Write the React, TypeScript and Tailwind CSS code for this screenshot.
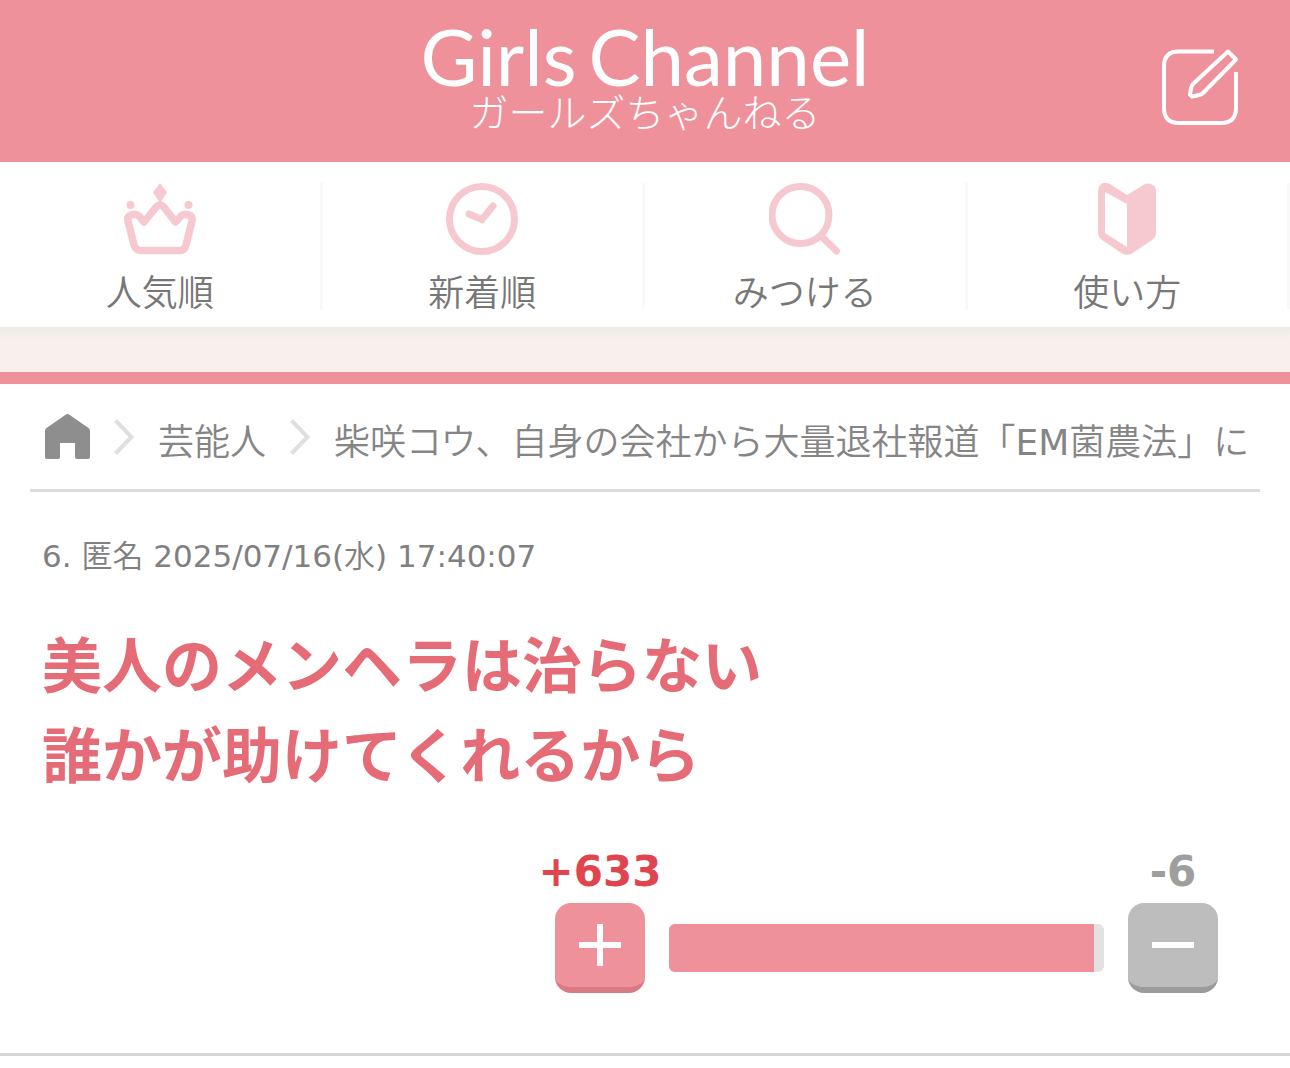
import React, { useState } from 'react'

type NavItem = {
  label: string;
  href: string;
  icon: React.ReactNode;
};

interface VoteProps {
  plus: number;
  minus: number;
}

const CrownIcon = () => (
  <svg className="h-[72px] w-[72px] shrink-0" viewBox="0 0 72 72" fill="none">
    <path d="M36 0 43 9.500 36 20 29 9.500Z" fill="#f6c9d1" />
    <circle cx="6.500" cy="22" r="4" fill="#f6c9d1" />
    <circle cx="64.500" cy="22" r="4" fill="#f6c9d1" />
    <path
      d="M10 62 4 38Q3 33.500 7 32Q12 30 15 33L20 39 31 25.500Q36 18.500 41 25.500L51.500 39 57 33Q60 30 65 32Q69 33.500 68 38L62 62Q60.500 67.500 56 67.500H16.500Q12 67.500 10 62Z"
      stroke="#f6c9d1"
      strokeWidth="7.500"
      strokeLinejoin="round"
    />
  </svg>
)

const ClockIcon = () => (
  <svg className="h-[72px] w-[72px] shrink-0" viewBox="0 0 72 72" fill="none" stroke="#f6c9d1" strokeWidth="7">
    <circle cx="36" cy="36" r="32.500" />
    <path d="M23 31 36 36.500 47 23" strokeLinecap="round" />
  </svg>
)

const SearchIcon = () => (
  <svg className="h-[72px] w-[72px] shrink-0" viewBox="0 0 72 72" fill="none" stroke="#f6c9d1" strokeWidth="7">
    <circle cx="31.500" cy="32" r="28.500" />
    <path d="M53 54 67.500 68" strokeLinecap="round" />
  </svg>
)

const GuideIcon = () => (
  <svg className="h-[72px] w-[72px] shrink-0" viewBox="0 0 72 72">
    <path
      fillRule="evenodd"
      fill="#f6c9d1"
      d="M36 12 54 1Q60-1 64 4Q65 6 65 8V50Q65 54 61 57L41 70.500Q36 73 31 70.500L11 57Q7 54 7 50V8Q7 2 12 0Q15-1 19 1ZM14 9V50L36 64V21Z"
    />
  </svg>
)

const ChevronIcon = () => (
  <svg className="h-9 w-5 shrink-0" viewBox="0 0 20 36" fill="none">
    <path d="M1.500 1.500 17.500 18 1.500 34.500" stroke="#dfdfdf" strokeWidth="4" />
  </svg>
)

const navItems: NavItem[] = [
  { label: '人気順', href: '#popular', icon: <CrownIcon /> },
  { label: '新着順', href: '#new', icon: <ClockIcon /> },
  { label: 'みつける', href: '#search', icon: <SearchIcon /> },
  { label: '使い方', href: '#guide', icon: <GuideIcon /> },
]

function Header() {
  return (
    <header className="grid h-[162px] grid-cols-[1fr_auto_1fr] items-start bg-[#ef919b] text-white">
      <a
        href="#top"
        className="col-start-2 flex flex-col items-center pt-[18px] whitespace-nowrap">
        <span className="flex gap-3 font-['Lato',sans-serif] text-[78px] leading-[76px] font-normal">
          <span>Girls</span>
          <span>Channel</span>
        </span>
        <span className="text-[39px] leading-10 font-light">ガールズちゃんねる</span>
      </a>
      <button
        type="button"
        aria-label="トピックを投稿"
        className="mt-12 mr-[51px] justify-self-end">
        <svg className="h-[78px] w-[78px]" viewBox="0 0 78 78" fill="none" stroke="#fff" strokeWidth="4">
          <path d="M53 3.500H18Q3 3.500 3 18V60Q3 75 18 75H60Q75 75 75 60V24" />
          <path d="M67 3.500 75 11.500 42 45Q40 47 31 48.500L29 46.500Q30 38 32 36Z" strokeLinejoin="round" />
        </svg>
      </button>
    </header>
  )
}

function Breadcrumbs() {
  return (
    <nav
      aria-label="パンくず"
      className="mx-[30px] flex h-[108px] items-center gap-6 border-b-[3px] border-[#dcdcdc] pl-[15px] text-4xl font-[350] whitespace-nowrap text-[#858585]">
      <a href="#home" aria-label="ホーム" className="shrink-0">
        <svg className="h-[45px] w-[45px]" viewBox="0 0 45 45">
          <path
            d="M21 .6Q22.500-.4 24 .6L43.500 14Q45 15 45 17V43Q45 45 43 45H32Q30 45 30 43V29H15V43Q15 45 13 45H2Q0 45 0 43V17Q0 15 1.500 14Z"
            fill="#8e8e8e"
          />
        </svg>
      </a>
      <ChevronIcon />
      <a href="#entertainer" className="shrink-0 pt-3">芸能人</a>
      <ChevronIcon />
      <a href="#topic" className="min-w-0 overflow-hidden pt-3">
        柴咲コウ、自身の会社から大量退社報道「<span className="font-normal">EM</span>菌農法」に
      </a>
    </nav>
  )
}

function Vote({ plus, minus }: VoteProps) {
  const [votes, setVotes] = useState({ plus, minus })
  const ratio = (votes.plus / (votes.plus + votes.minus)) * 100
  // keep the minus side visible even when it is tiny
  const width = Math.min(ratio, 97.7)

  return (
    <div className="ml-auto flex w-[663px] max-w-full items-end gap-6">
      <div className="flex w-[90px] flex-col items-center">
        <span className="text-[42px] leading-[63px] font-bold text-[#e0454d]">
          +{votes.plus}
        </span>
        <button
          type="button"
          aria-label="プラス"
          onClick={() => setVotes({ ...votes, plus: votes.plus + 1 })}
          className="flex h-[90px] w-[90px] justify-center rounded-2xl border-b-6 border-[#d87a84] bg-[#ef919b] pt-[21px]">
          <svg className="h-[42px] w-[42px]" viewBox="0 0 42 42" stroke="#fff" strokeWidth="6">
            <path d="M0 21H42M21 0V42" />
          </svg>
        </button>
      </div>
      <div className="mb-[21px] h-12 flex-1 overflow-hidden rounded-md bg-[#e2e2e2]">
        <div className="h-full bg-[#ef919b]" style={{ width: `${width}%` }} />
      </div>
      <div className="flex w-[90px] flex-col items-center">
        <span className="text-[42px] leading-[63px] font-bold text-[#9e9e9e]">
          -{votes.minus}
        </span>
        <button
          type="button"
          aria-label="マイナス"
          onClick={() => setVotes({ ...votes, minus: votes.minus + 1 })}
          className="flex h-[90px] w-[90px] justify-center rounded-2xl border-b-6 border-[#9b9b9b] bg-[#bdbdbd] pt-[21px]">
          <svg className="h-[42px] w-[42px]" viewBox="0 0 42 42" stroke="#fff" strokeWidth="6">
            <path d="M0 21H42" />
          </svg>
        </button>
      </div>
    </div>
  )
}

export default function App() {
  return (
    <div className="min-h-screen bg-white font-['DejaVu_Sans','Noto_Sans_CJK_JP',sans-serif]" lang="ja">
      <Header />
      <nav className="grid h-[165px] grid-cols-4 pt-[21px] pb-[18px]">
        {navItems.map((item) => (
          <a
            key={item.label}
            href={item.href}
            className="flex h-[126px] flex-col items-center gap-5 border-r-3 border-[#f9f9f9] text-4xl leading-[38px] font-[350] text-[#777]">
            {item.icon}
            <span>{item.label}</span>
          </a>
        ))}
      </nav>
      <div className="h-[57px] border-b-12 border-[#ef919b] bg-linear-to-b from-[#ecebe6] to-[#f9efed] to-25%" />

      <main>
        <Breadcrumbs />
        <article className="border-b-3 border-[#d6d6d6] pt-10 pr-[72px] pb-[60px] pl-[42px]">
          <p className="text-[31px] leading-12 text-[#808080]">
            6. <span className="font-[350]">匿名</span>{' '}
            <time dateTime="2025-07-16T17:40:07">
              2025/07/16(<span className="font-[350]">水</span>) 17:40:07
            </time>
          </p>
          <p className="mt-[42px] mb-[38px] text-[60px] leading-[90px] font-bold text-[#e56b76]">
            美人のメンヘラは治らない
            <br />
            誰かが助けてくれるから
          </p>
          <Vote plus={633} minus={6} />
        </article>
      </main>
    </div>
  )
}
